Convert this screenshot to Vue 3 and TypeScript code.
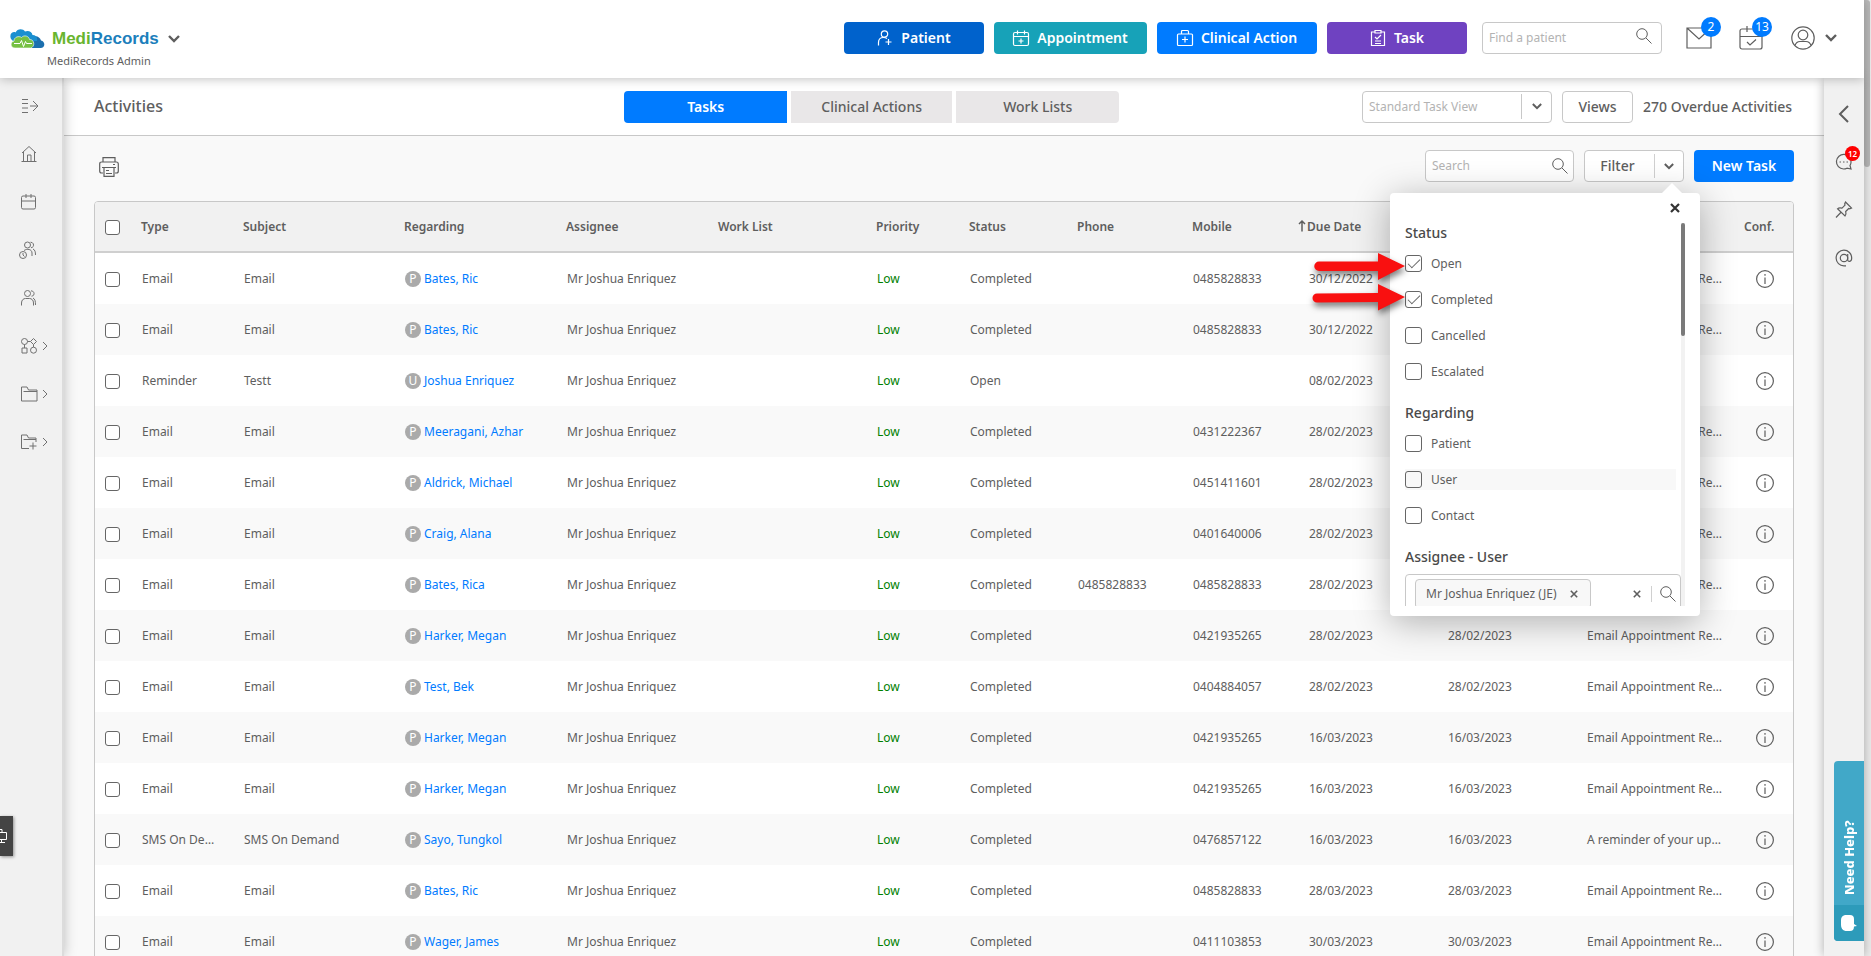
<script setup lang="ts">
import { ref } from 'vue'

interface Task {
  type: string
  subject: string
  kind: 'P' | 'U'
  regarding: string
  status: string
  phone: string
  mobile: string
  due: string
  start: string
  comment: string
}

const remind = 'Email Appointment Reminder'

const email = (regarding: string, mobile: string, due: string, phone = ''): Task => ({
  type: 'Email',
  subject: 'Email',
  kind: 'P',
  regarding,
  status: 'Completed',
  phone,
  mobile,
  due,
  start: due,
  comment: remind,
})

const tasks: Task[] = [
  email('Bates, Ric', '0485828833', '30/12/2022'),
  email('Bates, Ric', '0485828833', '30/12/2022'),
  {
    type: 'Reminder', subject: 'Testt', kind: 'U', regarding: 'Joshua Enriquez', status: 'Open',
    phone: '', mobile: '', due: '08/02/2023', start: '', comment: '',
  },
  email('Meeragani, Azhar', '0431222367', '28/02/2023'),
  email('Aldrick, Michael', '0451411601', '28/02/2023'),
  email('Craig, Alana', '0401640006', '28/02/2023'),
  email('Bates, Rica', '0485828833', '28/02/2023', '0485828833'),
  email('Harker, Megan', '0421935265', '28/02/2023'),
  email('Test, Bek', '0404884057', '28/02/2023'),
  email('Harker, Megan', '0421935265', '16/03/2023'),
  email('Harker, Megan', '0421935265', '16/03/2023'),
  {
    type: 'SMS On Demand', subject: 'SMS On Demand', kind: 'P', regarding: 'Sayo, Tungkol', status: 'Completed',
    phone: '', mobile: '0476857122', due: '16/03/2023', start: '16/03/2023', comment: 'A reminder of your upcoming visit',
  },
  email('Bates, Ric', '0485828833', '28/03/2023'),
  email('Wager, James', '0411103853', '30/03/2023'),
]

const statuses = ref([
  { label: 'Open', on: true },
  { label: 'Completed', on: true },
  { label: 'Cancelled', on: false },
  { label: 'Escalated', on: false },
])
const regardings = ref([
  { label: 'Patient', on: false },
  { label: 'User', on: false, active: true },
  { label: 'Contact', on: false },
])
const tabs = ['Tasks', 'Clinical Actions', 'Work Lists']
const currentTab = ref('Tasks')
</script>

<template>
  <div class="shell">
    <header class="top">
      <div class="brand">
        <div class="brand-row">
          <svg class="cloud" viewBox="0 0 36 20" width="36" height="20" aria-hidden="true">
            <path d="M20 19h11.500c5 0 5-6.500.5-7.500C31 8 27 6 24 8l-6 2z" fill="#1b6fae" />
            <path d="M2 10C-.5 4 5 2 6.500 3.500 8-.5 14-1 16 2.500c3-1.500 7 0 7.500 3.500C27 6 29 9 28 12H4z" fill="#1a8fd0" />
            <path d="M6 19c-5 0-5-6-1-7C5 8 10 6.500 12.500 8.500 15 5.500 20 7 20.500 10.500c5-.5 6 7.500 1 8.500z" fill="#76c043" stroke="#fff" stroke-width=".6" />
            <path d="M5 14.500h6l1.500-3 2 6 2-5 1 2H23" fill="none" stroke="#fff" stroke-width="1" />
          </svg>
          <span class="wordmark"><span class="medi">Medi</span><span class="records">Records</span></span>
          <svg class="ic heavy" viewBox="0 0 12 8" width="12" height="8"><path d="M1 1l5 5 5-5" /></svg>
        </div>
        <div class="account">MediRecords Admin</div>
      </div>

      <div class="top-actions">
        <button class="act patient" type="button">
          <svg class="ic" viewBox="0 0 16 16" width="16" height="16"><circle cx="7.500" cy="4" r="3.200" /><path d="M1.500 15.500v-3c0-3 2-5 5-5 1.500 0 2.500.3 3.500 1M11.500 9v6M8.500 12h6" /></svg>
          Patient
        </button>
        <button class="act appointment" type="button">
          <svg class="ic" viewBox="0 0 16 16" width="16" height="16"><rect x=".5" y="2.500" width="15" height="13" rx="1.500" /><path d="M.5 6.500h15M4.500.5v4M11.500.5v4M8 8.500v5M5.500 11h5" /></svg>
          Appointment
        </button>
        <button class="act clinical" type="button">
          <svg class="ic" viewBox="0 0 16 16" width="16" height="16"><rect x=".5" y="4" width="15" height="11.500" rx="1" /><path d="M4.500 4V1.500q0-1 1-1h5q1 0 1 1V4M8 6.500v6M5 9.500h6" /></svg>
          Clinical Action
        </button>
        <button class="act task" type="button">
          <svg class="ic" viewBox="0 0 16 16" width="16" height="16"><path d="M5 2H1.500v13.500h13V2H11M5 .5h6v2.500H5zM5 7l2 2 4-4M5 11h6M5 13.500h6" /></svg>
          Task
        </button>
        <label class="box find">
          <input type="text" placeholder="Find a patient" aria-label="Find a patient">
          <svg class="ic thin" viewBox="0 0 16 16" width="16" height="16"><circle cx="6" cy="6" r="5.300" /><path d="M10 10l5.500 5.500" /></svg>
        </label>
        <button class="icon-btn mail" type="button" aria-label="Messages">
          <svg class="ic" viewBox="0 0 26 24" width="26" height="24"><path d="M1 2h24v20H1zM1 2l12 11L25 2" /></svg>
          <span class="badge">2</span>
        </button>
        <button class="icon-btn cal" type="button" aria-label="Calendar">
          <svg class="ic" viewBox="0 0 24 24" width="24" height="24"><rect x="1" y="3" width="22" height="20" rx="2" /><path d="M1 10.500h22M8 0v6M16 0v6M8 16l3 3 6-5.500" /></svg>
          <span class="badge">13</span>
        </button>
        <button class="icon-btn user" type="button" aria-label="Profile">
          <svg class="ic" viewBox="0 0 24 24" width="24" height="24"><circle cx="12" cy="12" r="11.200" /><circle cx="12" cy="9" r="4.800" /><path d="M4 19.500c1-3 3-4 5-4h6c2 0 4 1 5 4" /></svg>
          <svg class="ic heavy" viewBox="0 0 12 8" width="12" height="8"><path d="M1 1l5 5 5-5" /></svg>
        </button>
      </div>
    </header>

    <div class="body">
      <nav class="side" aria-label="Main">
        <a href="#menu" aria-label="Expand"><svg class="ic" viewBox="0 0 18 16" width="18" height="16"><path d="M1 1.500h6M1 5.500h6M1 10h6M1 14.500h6M9 8h8M12 3l5 5-5 5" /></svg></a>
        <a href="#home" aria-label="Home"><svg class="ic" viewBox="0 0 18 16" width="18" height="16"><path d="M1 7L8 .5 15 7M2.500 6v9M13.500 6v9M.5 15.500h15M6.500 15V9H10v6" /></svg></a>
        <a href="#calendar" aria-label="Calendar"><svg class="ic" viewBox="0 0 18 16" width="18" height="16"><rect x=".5" y="2" width="14" height="13" rx="1.500" /><path d="M.5 7h14M5 0v4M10 0v4" /></svg></a>
        <a href="#waiting" aria-label="Waiting room"><svg class="ic" viewBox="0 0 18 18" width="18" height="18"><circle cx="6.500" cy="4" r="3" /><circle cx="2" cy="14" r="3.500" /><path d="M2 12v2l1.500 1.500M3 9.500C6 7.500 11 8 11 12v3M9.500 1.200c4 0 4 5.500.5 5.500M12 8c2 .8 2.500 3 2.500 6" /></svg></a>
        <a href="#patients" aria-label="Patients"><svg class="ic" viewBox="0 0 18 16" width="18" height="16"><circle cx="6.500" cy="3.500" r="3" /><path d="M.5 15.500V13c0-3 2-4.500 4-4.500h4c2 0 4 1.500 4 4.500v2.500M10 .8c4 0 4 5.400.5 5.400M12 8c2 1 2.500 3 2.500 7" /></svg></a>
        <a href="#flows" aria-label="Workflows"><svg class="ic" viewBox="0 0 18 16" width="18" height="16"><circle cx="3.500" cy="3.500" r="3" /><path d="M12.500.5l3 3-3 3-3-3zM1 10h5v5H1zM3.500 6.500V10M6.500 3.500h3M12.500 6.500V9" /><circle cx="12.500" cy="12.200" r="3" /></svg><svg class="ic arrow" viewBox="0 0 6 10" width="6" height="10"><path d="M0 1l4 4-4 4" /></svg></a>
        <a href="#files" aria-label="Files"><svg class="ic" viewBox="0 0 18 16" width="18" height="16"><path d="M.5 15V1h5.500l1.500 3H16v11zM2.500 5.500H16" /></svg><svg class="ic arrow" viewBox="0 0 6 10" width="6" height="10"><path d="M0 1l4 4-4 4" /></svg></a>
        <a href="#new" aria-label="New folder"><svg class="ic" viewBox="0 0 18 16" width="18" height="16"><path d="M8 14.500H.5V1h5.500l1.500 3h7.500v4M2.500 5.500H15M12 8.500v7M8.500 12h7" /></svg><svg class="ic arrow" viewBox="0 0 6 10" width="6" height="10"><path d="M0 1l4 4-4 4" /></svg></a>
      </nav>

      <main class="main">
        <div class="page-bar">
          <h1>Activities</h1>
          <div class="tabs">
            <button v-for="t in tabs" :key="t" type="button" :class="{ on: t === currentTab }" @click="currentTab = t">{{ t }}</button>
          </div>
          <div class="page-tools">
            <div class="box view-select">
              <select aria-label="Task view"><option>Standard Task View</option></select>
              <svg class="ic heavy" viewBox="0 0 12 8" width="10" height="7"><path d="M1 1l5 5 5-5" /></svg>
            </div>
            <button class="box plain" type="button">Views</button>
            <span class="overdue">270 Overdue Activities</span>
          </div>
        </div>

        <div class="content">
          <div class="toolbar">
            <button class="print" type="button" aria-label="Print">
              <svg class="ic" viewBox="0 0 20 20" width="20" height="20"><path d="M4 5V.7h12V5M4 16H2.500Q.7 16 .7 14V7q0-2 2-2h14.600q2 0 2 2v7q0 2-1.800 2H16M3 10.500h14M5 10.500v8.800h10v-8.800M7 13.500h3M7 16.500h6M14 7.500h2" /></svg>
            </button>
            <div class="toolbar-right">
              <label class="box search">
                <input type="text" placeholder="Search" aria-label="Search tasks">
                <svg class="ic thin" viewBox="0 0 16 16" width="16" height="16"><circle cx="6" cy="6" r="5.300" /><path d="M10 10l5.500 5.500" /></svg>
              </label>
              <div class="filter">
                <button class="filter-main" type="button">Filter</button>
                <button class="filter-toggle" type="button" aria-label="Filter options">
                  <svg class="ic heavy" viewBox="0 0 12 8" width="10" height="7"><path d="M1 1l5 5 5-5" /></svg>
                </button>

                <section class="pop" aria-label="Filter options">
                  <button class="close" type="button" aria-label="Close"><svg class="ic dark" viewBox="0 0 10 10" width="10" height="10"><path d="M1 1l8 8M9 1l-8 8" /></svg></button>
                  <div class="scroll">
                    <div class="fields">
                      <h2>Status</h2>
                      <label v-for="s in statuses" :key="s.label" class="opt"><input v-model="s.on" type="checkbox">{{ s.label }}</label>
                      <h2>Regarding</h2>
                      <label v-for="r in regardings" :key="r.label" class="opt" :class="{ active: r.active }"><input v-model="r.on" type="checkbox">{{ r.label }}</label>
                      <h2>Assignee - User</h2>
                      <div class="picker">
                        <span class="chip">Mr Joshua Enriquez (JE)
                          <button type="button" aria-label="Remove"><svg class="ic mid" viewBox="0 0 10 10" width="8" height="8"><path d="M1 1l8 8M9 1l-8 8" /></svg></button>
                        </span>
                        <button class="clear" type="button" aria-label="Clear"><svg class="ic mid" viewBox="0 0 10 10" width="8" height="8"><path d="M1 1l8 8M9 1l-8 8" /></svg></button>
                        <button class="lookup" type="button" aria-label="Find user"><svg class="ic thin" viewBox="0 0 16 16" width="16" height="16"><circle cx="6" cy="6" r="5.300" /><path d="M10 10l5.500 5.500" /></svg></button>
                      </div>
                    </div>
                    <div class="track"><div class="thumb"></div></div>
                  </div>
                  <svg class="pointers" viewBox="0 0 100 80" width="100" height="80" aria-hidden="true">
                    <g fill="#f91010">
                      <path d="M11 14.500h59V6l27 13-27 14v-9H11a4.500 4.500 0 010-9.500z" />
                      <path d="M9 46.500l61-.5V37l27 13-27 13.500V55L9 55.500a4.500 4.500 0 010-9z" />
                    </g>
                  </svg>
                </section>
              </div>
              <button class="new-task" type="button">New Task</button>
            </div>
          </div>

          <div class="table-wrap">
            <table>
              <colgroup>
                <col class="c36"><col class="c102"><col class="c161"><col class="c162"><col class="c152"><col class="c158"><col class="c93"><col class="c108"><col class="c115"><col class="c116"><col class="c139"><col class="c140"><col class="c157"><col class="c59">
              </colgroup>
              <thead>
                <tr>
                  <th><input type="checkbox" aria-label="Select all"></th>
                  <th>Type</th>
                  <th>Subject</th>
                  <th>Regarding</th>
                  <th>Assignee</th>
                  <th>Work List</th>
                  <th>Priority</th>
                  <th>Status</th>
                  <th>Phone</th>
                  <th>Mobile</th>
                  <th class="sorted"><svg class="ic bold" viewBox="0 0 8 12" width="8" height="12"><path d="M4 11.500V1M1 4l3-3 3 3" /></svg>Due Date</th>
                  <th></th>
                  <th></th>
                  <th>Conf.</th>
                </tr>
              </thead>
              <tbody>
                <tr v-for="(t, i) in tasks" :key="i">
                  <td><input type="checkbox" :aria-label="'Select ' + t.regarding"></td>
                  <td>{{ t.type }}</td>
                  <td>{{ t.subject }}</td>
                  <td><span class="who"><span class="kind">{{ t.kind }}</span><a href="#record">{{ t.regarding }}</a></span></td>
                  <td>Mr Joshua Enriquez</td>
                  <td></td>
                  <td class="low">Low</td>
                  <td>{{ t.status }}</td>
                  <td>{{ t.phone }}</td>
                  <td>{{ t.mobile }}</td>
                  <td>{{ t.due }}</td>
                  <td>{{ t.start }}</td>
                  <td class="comment">{{ t.comment }}</td>
                  <td class="conf">
                    <button type="button" aria-label="Details"><svg class="ic" viewBox="0 0 18 18" width="18" height="18"><circle cx="9" cy="9" r="8.400" /><path d="M9 7.500V14M9 4v1.800" /></svg></button>
                  </td>
                </tr>
              </tbody>
            </table>
          </div>
        </div>
      </main>

      <aside class="rail">
        <button type="button" aria-label="Collapse"><svg class="ic thick" viewBox="0 0 12 18" width="12" height="18"><path d="M10 1L2 9l8 8" /></svg></button>
        <button type="button" aria-label="Chat">
          <svg class="ic" viewBox="0 0 18 18" width="18" height="18"><path d="M16 9.500A7.300 7.300 0 108.500 16c1.500 0 2.500-.3 3.500-.8l4 .8-1-3.500c.6-1 1-2 1-3zM4.500 9h1.500M8 9h1.500M11.500 9H13" /></svg>
          <span class="alert">12</span>
        </button>
        <button type="button" aria-label="Pinned"><svg class="ic" viewBox="0 0 18 18" width="18" height="18"><path d="M10.500 1l6 6-1.800.8-1-.3-3 3c.6 2 .3 3.500-.7 4.500L2.500 7.800c1-1 2.500-1.300 4.500-.7l3-3-.3-1.200zM5.800 11.500L1 16.500" /></svg></button>
        <button type="button" aria-label="Mentions"><svg class="ic" viewBox="0 0 18 18" width="18" height="18"><circle cx="9" cy="9" r="3.700" /><path d="M12.700 5v5.500c0 3 4 2.500 4-1.500A7.800 7.800 0 109 16.800h2" /></svg></button>
      </aside>

      <button class="help" type="button">
        <span class="help-text">Need Help?</span>
        <span class="help-icon"><svg viewBox="0 0 16 16" width="16" height="16"><path d="M4 0h5q4 0 4 4v5l3 2-3 .5Q13 16 9 16H4.500Q0 15 0 10V5q0-4 4-5z" fill="#fff" /></svg></span>
      </button>
      <button class="screen" type="button" aria-label="Share screen">
        <svg viewBox="0 0 7 14" width="7" height="14"><path d="M0 3.500h6.500v7H0M0 .5h2v3M0 13.500h5M1.500 10.500v3" fill="none" stroke="#fff" /></svg>
      </button>
    </div>

    <div class="page-scroll"><div class="page-thumb"></div></div>
  </div>
</template>

<style>
body {
  margin: 0;
}
</style>

<style scoped>
.shell {
  position: relative;
  display: grid;
  grid-template-columns: minmax(0, 1fr) 7px;
  grid-template-rows: 78px minmax(0, 1fr);
  height: 100vh;
  overflow: hidden;
  background: #f9f9f9;
  color: #5e5e5e;
  font-family: "Noto Sans", "Open Sans", sans-serif;
  font-size: 12px;
  line-height: 20px;
}

.shell * {
  box-sizing: border-box;
}

button,
input,
select {
  font: inherit;
  color: inherit;
}

button {
  padding: 0;
  border: 0;
  background: none;
  cursor: pointer;
}

.ic {
  display: block;
  flex: none;
  fill: none;
  stroke: currentColor;
  stroke-width: 1.2;
  overflow: visible;
}

.ic.thin {
  stroke-width: 1;
}

.ic.heavy {
  stroke-width: 2.4;
}

.ic.thick,
.ic.mid {
  stroke-width: 2;
}

.ic.bold {
  stroke-width: 1.5;
}

.ic.dark {
  stroke: #333;
  stroke-width: 2.2;
}

.box {
  display: flex;
  align-items: center;
  height: 32px;
  border: 1px solid #c8c8c8;
  border-radius: 4px;
  background: #fff;
}

.box input,
.box select {
  flex: 1;
  min-width: 0;
  width: 100%;
  padding: 0 0 0 6px;
  border: 0;
  outline: 0;
  appearance: none;
  background: none;
}

.box select,
.box input::placeholder {
  color: #b3b3b3;
  opacity: 1;
}

/* header */
.top {
  position: relative;
  z-index: 5;
  display: flex;
  justify-content: space-between;
  padding: 0 27px 0 9px;
  background: #fff;
  box-shadow: 0 1px 10px rgba(0, 0, 0, .25);
}

.brand {
  padding-top: 26px;
}

.brand-row {
  display: flex;
  align-items: center;
  height: 25px;
}

.wordmark {
  margin: 0 9px 0 7px;
  font: bold 17px/25px "Liberation Sans", Arial, sans-serif;
}

.medi {
  color: #69b52f;
}

.records {
  color: #1c7fbc;
}

.account {
  padding-left: 38px;
  font-size: 11px;
}

.top-actions {
  display: flex;
  align-items: center;
  height: 32px;
  margin-top: 22px;
  gap: 10px;
}

.act {
  display: flex;
  align-items: center;
  justify-content: center;
  gap: 8px;
  width: 140px;
  height: 32px;
  border-radius: 4px;
  color: #fff;
  font-size: 14px;
  font-weight: 600;
}

.patient {
  background: #0062cc;
}

.appointment {
  width: 153px;
  background: #17a2b8;
}

.clinical {
  width: 160px;
  background: #007bff;
}

.task {
  background: #6f42c1;
}

.find {
  width: 180px;
  margin-left: 5px;
  padding-right: 9px;
}

.find .ic {
  margin-bottom: 4px;
}

.icon-btn {
  position: relative;
  display: flex;
  align-items: center;
  gap: 10px;
}

.mail {
  margin-left: 14px;
}

.cal {
  margin-left: 17px;
}

.user {
  margin-left: 18px;
}

.badge {
  position: absolute;
  right: -9px;
  bottom: 13px;
  width: 20px;
  height: 20px;
  border-radius: 50%;
  background: #007bff;
  color: #fff;
}

/* frame */
.body {
  position: relative;
  display: grid;
  grid-template-columns: 62px minmax(0, 1fr) 40px;
  min-height: 0;
}

.side {
  position: relative;
  z-index: 2;
  display: flex;
  flex-direction: column;
  padding: 4px 0 0 21px;
  background: #f1f1f1;
  box-shadow: 2px 0 0 #dcdcdc, 2px 0 12px rgba(0, 0, 0, .25);
}

.side a {
  display: flex;
  align-items: center;
  gap: 4px;
  height: 48px;
  color: #707070;
}

.side .ic {
  stroke-width: 1;
}

.main {
  display: flex;
  flex-direction: column;
  min-height: 0;
}

.page-bar {
  display: grid;
  grid-template-columns: minmax(0, 11fr) auto minmax(0, 14fr);
  align-items: center;
  flex: none;
  height: 58px;
  padding: 2px 30px 0 32px;
  border-bottom: 1px solid #c8c8c8;
  background: #fff;
}

.page-bar h1 {
  margin: 0;
  padding-bottom: 4px;
  font-size: 16px;
  font-weight: 500;
}

.tabs {
  display: flex;
  gap: 4px;
  padding: 0 0 2px;
}

.tabs button {
  width: 163px;
  height: 32px;
  background: #e9e7e8;
  font-size: 14px;
  font-weight: 500;
}

.tabs button:nth-child(2) {
  width: 161px;
}

.tabs button:first-child {
  border-radius: 4px 0 0 4px;
}

.tabs button:last-child {
  border-radius: 0 4px 4px 0;
}

.tabs button.on {
  background: #007bff;
  color: #fff;
  font-weight: 600;
}

.page-tools {
  display: flex;
  align-items: center;
  justify-content: flex-end;
  gap: 10px;
  padding-bottom: 2px;
}

.view-select {
  width: 190px;
  padding-right: 9px;
}

.view-select .ic {
  box-sizing: content-box;
  padding: 9px 0 9px 10px;
  border-left: 1px solid #c8c8c8;
}

.plain {
  justify-content: center;
  width: 71px;
  font-size: 14px;
  font-weight: 500;
}

.overdue {
  min-width: 151px;
  font-size: 14px;
  font-weight: 500;
  white-space: nowrap;
}

.content {
  display: flex;
  flex-direction: column;
  min-height: 0;
  padding: 14px 30px 0 32px;
}

.toolbar {
  position: relative;
  z-index: 3;
  display: flex;
  align-items: center;
  justify-content: space-between;
  flex: none;
  height: 32px;
  margin-bottom: 19px;
}

.print {
  margin: 2px 0 0 5px;
}

.toolbar-right {
  display: flex;
  gap: 10px;
}

.search {
  width: 149px;
  padding-right: 5px;
}

.filter {
  position: relative;
  display: flex;
  width: 100px;
  height: 32px;
  border: 1px solid #c8c8c8;
  border-radius: 4px;
  background: #fff;
}

.filter-main {
  flex: 1;
  padding-right: 4px;
  font-size: 14px;
  font-weight: 500;
}

.filter-toggle {
  display: flex;
  align-items: center;
  justify-content: center;
  width: 29px;
  margin: 3px 0;
  border-left: 1px solid #d0d0d0;
}

.new-task {
  width: 100px;
  height: 32px;
  border-radius: 4px;
  background: #007bff;
  color: #fff;
  font-size: 14px;
  font-weight: 600;
}

/* filter popover */
.pop {
  position: absolute;
  top: 42px;
  right: -17px;
  width: 310px;
  height: 423px;
  padding: 30px 15px 10px;
  border-radius: 4px;
  background: #fff;
  box-shadow: 0 6px 36px rgba(0, 0, 0, .3);
}

.pop::before {
  content: "";
  position: absolute;
  top: -10px;
  right: 18px;
  border: 10px solid transparent;
  border-top: 0;
  border-bottom-color: #fff;
}

.close {
  position: absolute;
  top: 10px;
  right: 20px;
}

.scroll {
  display: flex;
  height: 383px;
  overflow: hidden;
}

.fields {
  flex: 1;
  min-width: 0;
}

.track {
  flex: none;
  width: 4px;
  background: #f2f2f2;
}

.thumb {
  height: 113px;
  border-radius: 2px;
  background: #7a7a7a;
}

.fields h2 {
  margin: 0 0 10px;
  color: #4a4a4a;
  font-size: 14px;
  font-weight: 500;
  line-height: 20px;
}

.opt {
  display: flex;
  align-items: center;
  gap: 9px;
  height: 21px;
  margin: 0 5px 15px 0;
}

.opt + h2 {
  margin-top: 21px;
}

.opt.active {
  background: #f8f8f8;
}

input[type="checkbox"] {
  position: relative;
  display: block;
  width: 15px;
  height: 15px;
  margin: 0;
  border: 1px solid #666;
  border-radius: 3px;
  appearance: none;
  background: #fff;
}

.opt input[type="checkbox"] {
  width: 17px;
  height: 17px;
}

.opt.active input[type="checkbox"] {
  background: #f8f8f8;
}

.opt input:checked::before {
  content: "";
  position: absolute;
  top: 3px;
  left: 2px;
  width: 11px;
  height: 5px;
  border: solid #666;
  border-width: 0 0 1px 1px;
  transform: rotate(-45deg);
}

.picker {
  display: flex;
  align-items: center;
  height: 40px;
  margin-top: -3px;
  padding: 0 4px 0 9px;
  border: 1px solid #c8c8c8;
  border-radius: 4px;
}

.chip {
  display: flex;
  align-items: center;
  justify-content: space-between;
  width: 176px;
  height: 30px;
  margin-right: auto;
  padding: 0 12px 0 10px;
  border: 1px solid #c8c8c8;
  border-radius: 4px;
  background: #f8f8f8;
}

.lookup {
  margin-left: 10px;
  padding-left: 8px;
  border-left: 1px solid #d0d0d0;
}

.pointers {
  position: absolute;
  top: 54px;
  left: -82px;
  filter: drop-shadow(1px 4px 3px rgba(0, 0, 0, .5));
  pointer-events: none;
}

/* table */
.table-wrap {
  flex: none;
  border: 1px solid #c8c8c8;
  border-radius: 4px 4px 0 0;
  background: #fff;
  overflow: hidden;
}

table {
  width: 100%;
  table-layout: fixed;
  border-collapse: separate;
  border-spacing: 0;
}

.c36 { width: 36px; }
.c59 { width: 59px; }
.c93 { width: 93px; }
.c102 { width: 102px; }
.c108 { width: 108px; }
.c115 { width: 115px; }
.c116 { width: 116px; }
.c139 { width: 139px; }
.c140 { width: 140px; }
.c152 { width: 152px; }
.c157 { width: 157px; }
.c158 { width: 158px; }
.c161 { width: 161px; }
.c162 { width: 162px; }

th {
  height: 51px;
  padding: 0 0 0 10px;
  border-bottom: 2px solid #cfcfcf;
  background: #f1f1f1;
  font-weight: 600;
  text-align: left;
}

th.sorted {
  padding-left: 0;
}

.sorted .ic {
  display: inline-block;
  margin-right: 1px;
  vertical-align: -1px;
}

td {
  height: 51px;
  padding: 0 17px 0 11px;
  overflow: hidden;
  text-overflow: ellipsis;
  white-space: nowrap;
}

tbody tr:nth-child(even) {
  background: #f9f9f9;
}

th:first-child,
td:first-child {
  padding: 2px 0 0 10px;
}

td.comment {
  padding: 0 9px 0 10px;
}

td.conf {
  padding: 0 0 0 22px;
}

.conf button {
  display: block;
}

.who {
  display: flex;
  align-items: center;
  gap: 3px;
}

.who a {
  color: #007bff;
  text-decoration: none;
}

.kind {
  width: 16px;
  height: 16px;
  border-radius: 50%;
  background: #aaa;
  color: #fff;
  line-height: 16px;
  text-align: center;
}

.low {
  color: #008000;
}

/* right rail */
.rail {
  position: relative;
  z-index: 2;
  display: flex;
  flex-direction: column;
  padding-top: 12px;
  background: #f1f1f1;
  box-shadow: 0 0 10px rgba(0, 0, 0, .3);
}

.rail button {
  position: relative;
  display: flex;
  align-items: center;
  justify-content: center;
  height: 48px;
}

.alert {
  position: absolute;
  top: 8px;
  right: 4px;
  width: 15px;
  height: 15px;
  border-radius: 50%;
  background: #f00;
  color: #fff;
  font-size: 8px;
  font-weight: 600;
  line-height: 15px;
}

.help {
  position: absolute;
  z-index: 3;
  right: 0;
  bottom: 15px;
  width: 30px;
  height: 180px;
  display: flex;
  flex-direction: column;
  align-items: center;
  border-radius: 4px 0 0 4px;
  background: #41a8c8;
  color: #fff;
  overflow: hidden;
}

.help-text {
  flex: 1;
  padding-top: 10px;
  font-size: 13px;
  font-weight: 800;
  line-height: 30px;
  text-align: start;
  writing-mode: vertical-rl;
  transform: rotate(180deg);
}

.help-icon {
  display: flex;
  align-items: center;
  justify-content: center;
  width: 30px;
  height: 36px;
  background: #2d9bba;
}

.screen {
  position: absolute;
  z-index: 3;
  left: 0;
  bottom: 100px;
  display: flex;
  align-items: center;
  width: 13px;
  height: 40px;
  background: #444;
  box-shadow: 1px 1px 3px rgba(0, 0, 0, .4);
}

.page-scroll {
  grid-column: 2;
  grid-row: 1 / 3;
  background: #ececec;
}

.page-thumb {
  width: 6px;
  height: 167px;
  border-radius: 0 3px 3px 3px;
  background: #b8b8b8;
}
</style>
